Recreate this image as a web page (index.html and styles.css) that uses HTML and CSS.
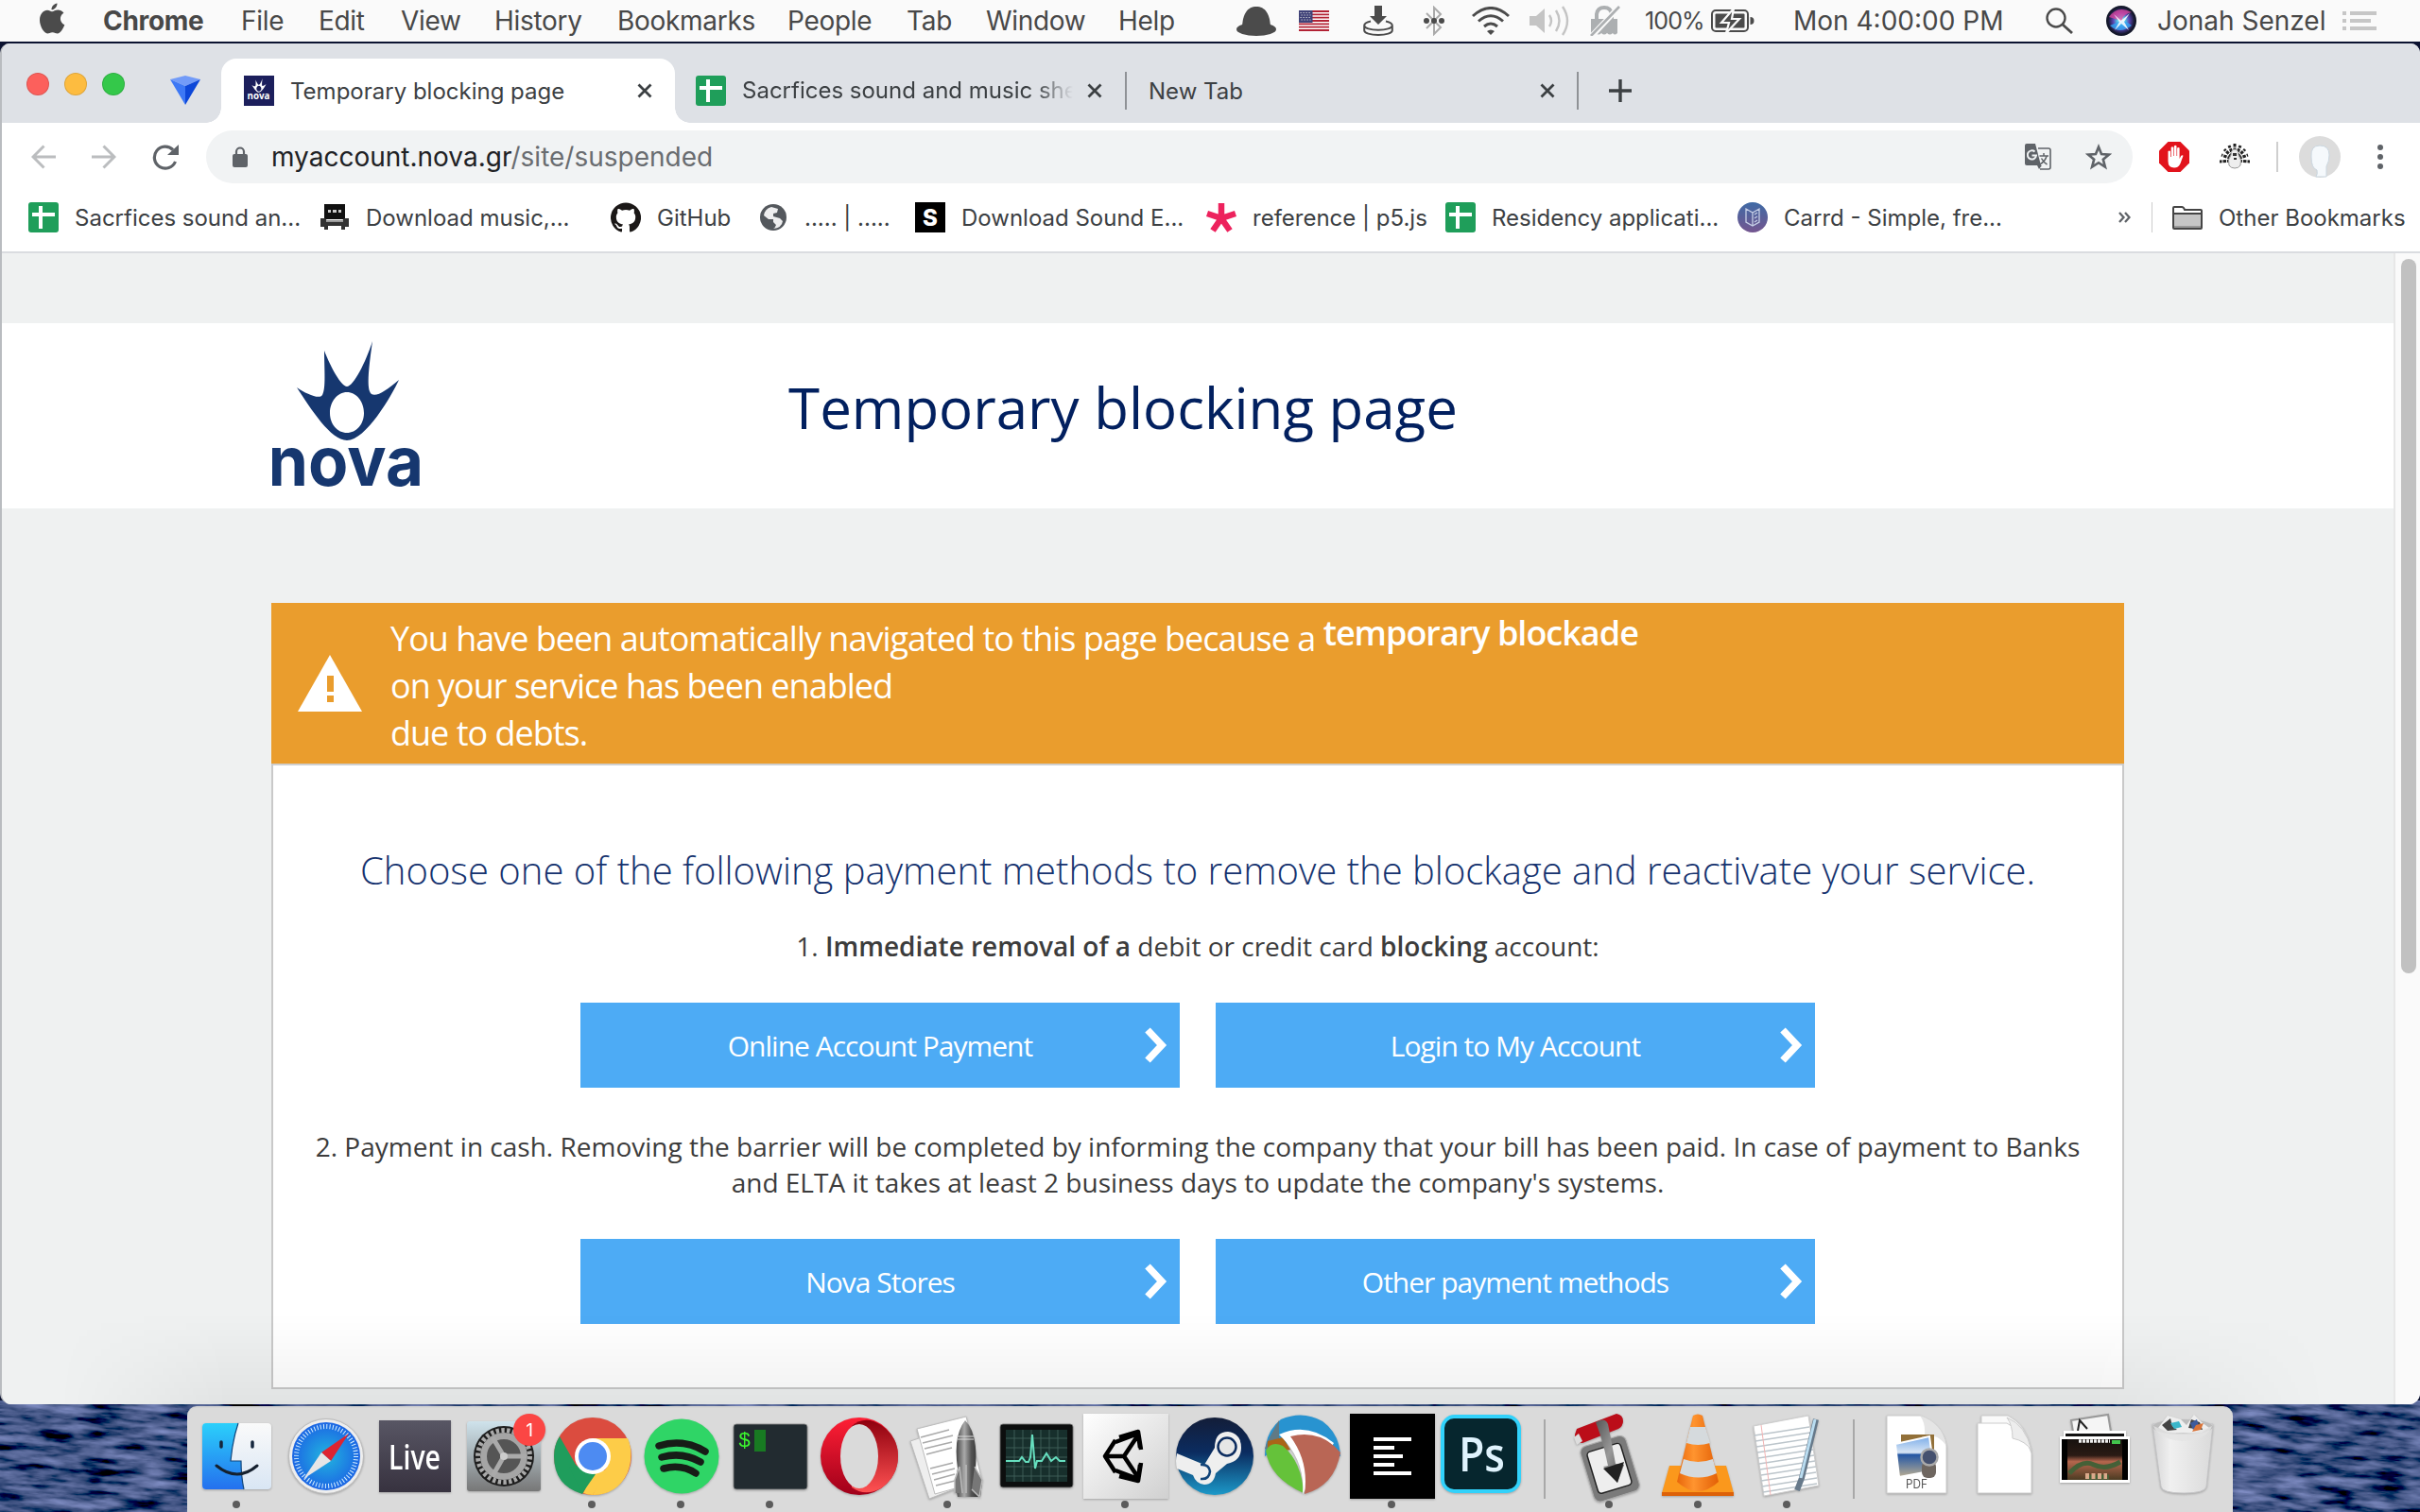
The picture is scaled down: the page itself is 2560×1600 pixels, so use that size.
FILE: index.html
```html
<!DOCTYPE html>
<html lang="en">
<head>
<meta charset="utf-8">
<title>Temporary blocking page</title>
<link rel="stylesheet" href="styles.css">
</head>
<body>
<svg width="0" height="0" class="defs" aria-hidden="true">
  <defs>
    <symbol id="sheets" viewBox="0 0 32 32"><rect width="32" height="32" rx="3" fill="#1f9e5a"/><path d="M11 4h4v24h-4zM4 11h24v4H4z" fill="#fff"/></symbol>
    <symbol id="close" viewBox="0 0 16 16"><path d="M1.500 1.500 14.500 14.500M14.500 1.500 1.500 14.500" stroke="#3c4043" stroke-width="2.800"/></symbol>
    <symbol id="figure" viewBox="0 0 108 106"><path fill-rule="evenodd" d="M0 49C10 56 24 62 27 57C31 50 29 30 29 10C36 28 47 48 53 48C60 48 73 22 80 0C77 22 74 44 77 53C80 62 93 54 108 41C100 58 73 105 53 105C36 105 15 72 0 49ZM53 54C43 54 35 64 35 76C35 88 43 97 53 97C63 97 71 88 71 76C71 64 63 54 53 54Z"/></symbol>
    <symbol id="chev" viewBox="0 0 24 38"><path d="M3 3 18 19 3 35" fill="none" stroke="#fff" stroke-width="7.500"/></symbol>
    <linearGradient id="gFinder" x2="0" y2="1"><stop stop-color="#2bd0fb"/><stop offset="1" stop-color="#2470ee"/></linearGradient>
    <linearGradient id="gFace" x2="0" y2="1"><stop stop-color="#fafafa"/><stop offset="1" stop-color="#d9e6f4"/></linearGradient>
    <radialGradient id="gSafari"><stop stop-color="#21b5df"/><stop offset="1" stop-color="#1c66e4"/></radialGradient>
    <linearGradient id="gLive" x2="0" y2="1"><stop stop-color="#585664"/><stop offset="1" stop-color="#37323f"/></linearGradient>
    <linearGradient id="gPrefs" x2="0" y2="1"><stop stop-color="#cfe3ec"/><stop offset="1" stop-color="#777"/></linearGradient>
    <linearGradient id="gOpera" x2="0" y2="1"><stop stop-color="#ff1f35"/><stop offset="1" stop-color="#a0001a"/></linearGradient>
    <linearGradient id="gOpera2" x2="0" y2="1"><stop stop-color="#8e000e"/><stop offset="1" stop-color="#ff5152"/></linearGradient>
    <linearGradient id="gRocket"><stop stop-color="#333"/><stop offset=".35" stop-color="#aaa"/><stop offset=".6" stop-color="#555"/><stop offset="1" stop-color="#222"/></linearGradient>
    <linearGradient id="gUnity" x2="1" y2="1"><stop stop-color="#fff"/><stop offset="1" stop-color="#d0d0d0"/></linearGradient>
    <linearGradient id="gSteam" x2="0" y2="1"><stop stop-color="#131d38"/><stop offset=".45" stop-color="#0b2c60"/><stop offset="1" stop-color="#1c99c9"/></linearGradient>
    <linearGradient id="gMetal" x2="1" y2="1"><stop stop-color="#555"/><stop offset=".5" stop-color="#999"/><stop offset="1" stop-color="#555"/></linearGradient>
    <linearGradient id="gCone"><stop stop-color="#e8660a"/><stop offset=".4" stop-color="#ff942f"/><stop offset="1" stop-color="#e35f05"/></linearGradient>
    <linearGradient id="gBin"><stop stop-color="#d5d5d6"/><stop offset=".3" stop-color="#f0f0f0"/><stop offset="1" stop-color="#dadada"/></linearGradient>
    <linearGradient id="gSea" x2="0" y2="1"><stop stop-color="#7aabe8"/><stop offset=".4" stop-color="#d8e6f5"/><stop offset=".45" stop-color="#2457a5"/><stop offset="1" stop-color="#b9ad92"/></linearGradient>
    <linearGradient id="gGame" x2="0" y2="1"><stop stop-color="#17120f"/><stop offset=".4" stop-color="#2a1a14"/><stop offset=".55" stop-color="#b5664d"/><stop offset="1" stop-color="#4b3b22"/></linearGradient>
    <radialGradient id="gSiri"><stop stop-color="#fff"/><stop offset=".3" stop-color="#54c8e8"/><stop offset=".6" stop-color="#5b46b4"/><stop offset="1" stop-color="#15182e"/></radialGradient>
    <linearGradient id="gCarrd" x2="0" y2="1"><stop stop-color="#3f6aa5"/><stop offset="1" stop-color="#74568f"/></linearGradient>
  </defs>
</svg>

<svg class="sea" width="2560" height="118" aria-hidden="true">
  <filter id="waves" x="0" y="0" width="100%" height="100%"><feTurbulence type="fractalNoise" baseFrequency=".022 .11" numOctaves="4" seed="8"/><feColorMatrix values=".45 0 0 0 -.17  .5 0 0 0 -.16  .9 0 0 0 -.22  0 0 0 0 1"/></filter>
  <g transform="rotate(4)"><rect y="-200" width="2600" height="420" filter="url(#waves)"/></g>
</svg>

<header class="menubar">
  <nav class="menus">
    <svg class="apple" width="28" height="34" viewBox="0 0 28 34"><path d="M19.500.5C19.700 4 16.500 7.500 13.500 7.300 13.200 4 16.300.9 19.500.5ZM14 9.200c1.600 0 3.500-1.700 6.400-1.700 2 0 4.500 1 6 3.300-5.200 3-4.300 10.300.9 12.500C26 27 23 32.500 19.800 32.500c-2 0-2.800-1.300-5.300-1.300s-3.500 1.300-5.300 1.300C5.500 32.500 1 24.500 1 18.300 1 11.500 5.300 7.800 9 7.800c2.300 0 3.700 1.400 5 1.400Z" fill="#4b4b4b"/></svg>
    <b class="m1">Chrome</b><span class="m2">File</span><span class="m3">Edit</span><span class="m4">View</span><span class="m5">History</span><span class="m6">Bookmarks</span><span class="m7">People</span><span class="m8">Tab</span><span class="m9">Window</span><span>Help</span>
  </nav>
  <div class="status">
    <svg class="s-hat" width="42" height="32" viewBox="0 0 42 32"><ellipse cx="21" cy="25" rx="21" ry="7" fill="#4b4b4b"/><path d="M6 25C6 8 12 1 21 1s15 7 15 24Z" fill="#4b4b4b"/></svg>
    <svg class="s-flag" width="32" height="22" viewBox="0 0 32 22"><path fill="#fff" d="M0 0h32v22H0z"/><path stroke="#b22234" stroke-width="1.800" d="M0 1h32M0 4.300h32M0 7.600h32M0 11h32M0 14.300h32M0 17.600h32M0 21h32"/><path fill="#3f4278" d="M0 0h14.500v13H0z"/><path stroke="#ddd" stroke-width="1.200" stroke-dasharray="1.200 1.800" d="M1.500 2.500h12M2.500 5h10M1.500 7.500h12M2.500 10h10"/></svg>
    <svg class="s-down" width="32" height="32" viewBox="0 0 32 32"><path d="M12 0h8v11h5l-9 9-9-9h5z" fill="#4b4b4b"/><path d="M8 16.500C4 17.300 1.200 19 1.200 21c0 2.700 6.500 4.800 14.800 4.800S30.800 23.700 30.800 21c0-2-2.800-3.700-6.800-4.500M1.200 21v5.300C1.200 29 7.700 31 16 31s14.800-2 14.800-4.700V21" fill="none" stroke="#4b4b4b" stroke-width="2"/></svg>
    <svg class="s-bt" width="22" height="32" viewBox="0 0 22 32"><path d="M3 8l15 15-7 7V2l7 7L3 24" fill="none" stroke="#aaa" stroke-width="2"/><g fill="#4b4b4b"><circle cx="3" cy="16" r="3"/><circle cx="11" cy="16" r="3"/><circle cx="19" cy="16" r="3"/></g></svg>
    <svg class="s-wifi" width="40" height="30" viewBox="0 0 40 30"><g fill="none" stroke="#4b4b4b" stroke-width="3"><path d="M1 10Q20-7 39 10"/><path d="M7 15.500Q20 4 33 15.500"/><path d="M13 21q7-6 14 0"/></g><path d="M16 26q4-3 8 0l-4 4z" fill="#4b4b4b"/></svg>
    <svg class="s-vol" width="42" height="32" viewBox="0 0 42 32"><path d="M0 11h7l9-8v26l-9-8H0z" fill="#c4c4c4"/><path d="M21 10q4 6 0 12M28 5q7 11 0 22M35 1q10 15 0 30" fill="none" stroke="#c4c4c4" stroke-width="2.400"/></svg>
    <svg class="s-lock" width="32" height="32" viewBox="0 0 32 32"><path d="M7 14V9Q8 2 15 2q7 0 8 7v5" fill="none" stroke="#acafb1" stroke-width="4"/><path d="M1 14h28v15q-3 3-5 0-3 3-6 0-3 3-6 0-3 3-6 0-3 3-5 0z" fill="#acafb1"/><path d="M1 33 31 1" stroke="#fafafa" stroke-width="6"/><path d="M1 32 31 1" stroke="#acafb1" stroke-width="2.600"/></svg>
    <span class="pct">100%</span>
    <svg class="s-batt" width="46" height="24" viewBox="0 0 46 24"><rect x="1" y="1" width="38" height="22" rx="4" fill="none" stroke="#4b4b4b" stroke-width="2"/><rect x="4.500" y="4.500" width="31" height="15" rx="1" fill="#4b4b4b"/><path d="M41.500 8q4 0 4 4t-4 4z" fill="#4b4b4b"/><path d="M24-1 11 14h8l-3 11 14-15h-8z" fill="#4b4b4b" stroke="#fafafa" stroke-width="2.200"/></svg>
    <span class="clock">Mon 4:00:00 PM</span>
    <svg class="s-find" width="30" height="28" viewBox="0 0 30 28"><circle cx="11" cy="11" r="9.500" fill="none" stroke="#4b4b4b" stroke-width="2.400"/><path d="m18 18 10 9" stroke="#4b4b4b" stroke-width="2.800"/></svg>
    <svg class="s-siri" width="32" height="32" viewBox="0 0 32 32"><circle cx="16" cy="16" r="16" fill="#14182b"/><circle cx="16" cy="16" r="14" fill="url(#gSiri)"/><path d="M3 12q9-13 24-5-8 1-11 9Z" fill="#e0459e" opacity=".75"/><path d="M4 21q10 10 23 0-6-5-11-5Z" fill="#33a8f5" opacity=".8"/><path d="m8 9 8 7 9-8-6 9 5 9-8-7-7 7 5-9z" fill="#fff" opacity=".85"/></svg>
    <span class="user">Jonah Senzel</span>
    <svg width="36" height="20" viewBox="0 0 36 20"><path d="M0 2h4M8 2h28M0 10h4M8 10h22M0 18h4M8 18h28" stroke="#c6c6c6" stroke-width="4"/></svg>
  </div>
</header>

<div class="window">
  <div class="tabstrip">
    <div class="lights"><i class="red"></i><i class="yellow"></i><i class="green"></i></div>
    <svg class="gem" width="32" height="32" viewBox="0 0 32 32"><path d="M0 4 16 0l16 4-16 7z" fill="#729bf8"/><path d="m0 4 16 7v20z" fill="#3d78f5"/><path d="M32 4 16 11v20z" fill="#0d47d8"/></svg>
    <div class="tab active">
      <svg width="32" height="32" viewBox="0 0 32 32"><path fill="#1c1f5c" d="M0 0h32v32H0z"/><use href="#figure" x="8" y="3" width="16" height="15" fill="#fff"/><text x="3.500" y="25" font-family="Open Sans" font-weight="700" font-size="11" textLength="24" lengthAdjust="spacingAndGlyphs" fill="#fff">nova</text></svg>
      <span class="label t1">Temporary blocking page</span>
      <svg width="16" height="16"><use href="#close"/></svg>
    </div>
    <div class="tab second">
      <svg width="32" height="32"><use href="#sheets"/></svg>
      <span class="label faded t2">Sacrfices sound and music sheet</span>
      <svg width="16" height="16"><use href="#close"/></svg>
    </div>
    <div class="tab third">
      <span class="label t3">New Tab</span>
      <svg width="16" height="16"><use href="#close"/></svg>
    </div>
    <svg class="plus" width="24" height="24" viewBox="0 0 24 24"><path d="M12 0v24M0 12h24" stroke="#3c4043" stroke-width="3.400"/></svg>
  </div>

  <div class="toolbar">
    <svg class="back" width="26" height="26" viewBox="0 0 26 26"><path d="M26 13H2M13.500 1.500 2 13l11.500 11.500" fill="none" stroke="#bbbdbf" stroke-width="3"/></svg>
    <svg class="fwd" width="26" height="26" viewBox="0 0 26 26"><path d="M0 13h24M12.500 1.500 24 13 12.500 24.500" fill="none" stroke="#bbbdbf" stroke-width="3"/></svg>
    <svg class="reload" width="28" height="27" viewBox="0 0 28 27"><path d="M24.500 18A11.500 11.500 0 1 1 22 5.500" fill="none" stroke="#5f6368" stroke-width="3.200"/><path d="M28 0v11H16z" fill="#5f6368"/></svg>
    <div class="omnibox">
      <svg width="16" height="22" viewBox="0 0 16 22"><rect y="8" width="16" height="14" rx="2" fill="#5f6368"/><path d="M4 9V5.500a4 4 0 0 1 8 0V9" fill="none" stroke="#5f6368" stroke-width="2.200"/></svg>
      <span class="url">myaccount.nova.gr<em>/site/suspended</em></span>
      <svg class="translate" width="28" height="28" viewBox="0 0 28 28"><path d="M14 5h11q2 0 2 2v18q0 2-2 2H16" fill="none" stroke="#5f6368" stroke-width="1.600"/><path d="M2 0h9l6 23H2q-2 0-2-2V2Q0 0 2 0Z" fill="#5f6368"/><path d="m13 23 5 0-3 4z" fill="#5f6368"/><path d="M10.500 8.500A4.600 4.600 0 1 0 12 12.500H7.500" fill="none" stroke="#f1f3f4" stroke-width="2"/><path d="M15.500 13H25M20 10v3M23 13q-1 5-7 9M17.500 15.500q2 4 6 6.500" fill="none" stroke="#5f6368" stroke-width="1.500"/></svg>
      <svg width="28" height="28" viewBox="0 0 28 28"><path d="m14 3.500 3 7.500 8 .6-6.200 5.100 2.100 7.900L14 20.200l-6.900 4.400 2.100-7.900L3 11.600l8-.6z" fill="none" stroke="#5f6368" stroke-width="2.600"/></svg>
    </div>
    <svg class="abp" width="32" height="32" viewBox="0 0 32 32"><path d="M9.500 0h13L32 9.500v13L22.500 32h-13L0 22.500v-13z" fill="#e2131c"/><path d="M9.500 10q1.500-1.200 2.500 0v6h.7V6q1.300-1.300 2.600 0v9h.6V4.500q1.300-1.300 2.600 0V15h.6V6.500q1.300-1.200 2.500 0V18l1.500-3q1.500-1.500 2.400-.2L22.500 23q-2 4.500-6.500 4.500-6.500 0-6.500-7z" fill="#fff"/></svg>
    <svg class="peacock" width="32" height="28" viewBox="0 0 32 28"><g stroke="#222" stroke-width="3" stroke-dasharray="3.500 1"><path d="M16 18 0 19M16 17 2 12M16 17 5 6M16 17 10 2M16 17V0M16 17 22 2M16 17 27 6M16 17l14-5M16 18l16 1"/></g><path d="M16 6q4 0 4 6 4 5 2 11-2 3-6 3t-6-3q-2-6 2-11 0-6 4-6Z" fill="#eee" stroke="#999"/><path d="M14 10h4v3h-4zM15 15h3v2h-3z" fill="#333"/></svg>
    <i class="tsep"></i>
    <svg class="avatar" width="44" height="44" viewBox="0 0 44 44"><circle cx="22" cy="22" r="22" fill="#dcdcdc"/><path d="M13 22q-1-12 9-12t10 10q0 7-3 12v11H18q2-3 1-7-6-2-6-14Z" fill="#f5f9fc" stroke="#c9d5de" stroke-width="1"/></svg>
    <svg width="6" height="28" viewBox="0 0 6 28"><g fill="#5f6368"><circle cx="3" cy="4" r="3"/><circle cx="3" cy="14" r="3"/><circle cx="3" cy="24" r="3"/></g></svg>
  </div>

  <div class="bookmarks">
    <div class="bm"><svg width="32" height="32"><use href="#sheets"/></svg><span class="b1">Sacrfices sound an...</span></div>
    <div class="bm"><svg width="32" height="32" viewBox="0 0 32 32"><path d="M5 2h22v16H5z" fill="#111"/><path d="M9 8h3v3H9zM14 8h4v3h-4zM20 8h3v3h-3z" fill="#ccc"/><path d="M1 17h5l3 4h14l3-4h5v9h-4v3h-4v-4H9v4H5v-3H1z" fill="#333"/><path d="M7 19h18v2H7z" fill="#999"/></svg><span class="b2">Download music,...</span></div>
    <div class="bm"><svg width="32" height="32" viewBox="0 0 16 16"><path d="M8 .2a8 8 0 0 0-2.530 15.590c.4.070.55-.17.550-.38v-1.490c-2.230.48-2.700-.95-2.700-.95-.36-.92-.89-1.170-.89-1.170-.73-.5.050-.49.050-.49.810.06 1.230.83 1.230.83.720 1.230 1.880.87 2.340.67.070-.52.280-.88.510-1.080-1.780-.2-3.640-.89-3.640-3.950 0-.88.310-1.590.82-2.150-.08-.2-.36-1.020.08-2.120 0 0 .67-.22 2.200.82a7.600 7.600 0 0 1 4 0c1.530-1.040 2.200-.82 2.200-.82.440 1.100.160 1.920.08 2.120.510.560.82 1.270.82 2.150 0 3.070-1.870 3.750-3.650 3.950.290.250.54.730.54 1.480v2.200c0 .210.150.460.550.38A8 8 0 0 0 8 .2Z" fill="#1b1817"/></svg><span class="b3">GitHub</span></div>
    <div class="bm"><svg width="32" height="32" viewBox="0 0 32 32"><circle cx="16" cy="16" r="14" fill="#54585d"/><path d="M14 5q-7 2-8 9l5 4 5 0 0 3 3 3q-1 3-3 4 9-1 10-8l-3-3-7-2 0-3 4-1 1-4z" fill="#fff" opacity=".9"/></svg><span class="b4">..... | .....</span></div>
    <div class="bm"><svg width="32" height="32" viewBox="0 0 32 32"><path d="M0 0h32v32H0z"/><text x="16" y="25" text-anchor="middle" font-family="Inter" font-weight="800" font-size="24" fill="#fff">S</text></svg><span class="b5">Download Sound E...</span></div>
    <div class="bm"><svg width="32" height="32" viewBox="0 0 32 32"><path d="M16 17V1M16 17 1 12M16 17l15-5M16 17 7 30M16 17l9 13" stroke="#ed225d" stroke-width="6.500"/></svg><span class="b6">reference | p5.js</span></div>
    <div class="bm"><svg width="32" height="32"><use href="#sheets"/></svg><span class="b7">Residency applicati...</span></div>
    <div class="bm"><svg width="32" height="32" viewBox="0 0 32 32"><circle cx="16" cy="16" r="16" fill="url(#gCarrd)"/><path d="m9 7 7 4 7-4v14l-7 4-7-4zM16 11v14M18 13l3-2M18 17l3-2M18 21l3-2" fill="none" stroke="#c6cfe6" stroke-width="1.300"/></svg><span class="b8">Carrd - Simple, fre...</span></div>
    <svg class="more" width="13" height="12" viewBox="0 0 13 12"><path d="m1 1 4.500 5L1 11M7 1l4.500 5L7 11" fill="none" stroke="#5f6368" stroke-width="2.300"/></svg>
    <div class="bm other"><svg width="32" height="32" viewBox="0 0 32 32"><path d="M1 8V6q0-1 1-1h8q2 0 3 3h17q1 0 1 1v19H1z" fill="#fff"/><path d="M1 12h30v16H1z" fill="#c6c6c6"/><path d="M1 25h30v3H1z" fill="#999"/><path d="M1 12V6q0-1 1-1h8q2 0 3 3h17q1 0 1 1v18q0 1-1 1H2q-1 0-1-1V12h30" fill="none" stroke="#454545" stroke-width="2"/></svg><span class="b9">Other Bookmarks</span></div>
  </div>

  <div class="viewport">
    <div class="page">
      <div class="masthead">
        <svg class="logo" width="158" height="156" viewBox="0 0 158 156"><use href="#figure" x="26" y="0" width="108" height="106" fill="#16376f"/><text x="-5" y="152.500" font-family="Inter" font-weight="700" font-size="73" textLength="165" lengthAdjust="spacingAndGlyphs" fill="#16376f">nova</text></svg>
        <h1><span>Temporary blocking page</span></h1>
      </div>
      <div class="card">
        <div class="alert">
          <svg width="68" height="60" viewBox="0 0 68 60"><path d="M34 0 68 60H0z" fill="#fff"/><path d="M31 22h7v17h-7zM31 43h7v7h-7z" fill="#ea9d2d"/></svg>
          <p><span class="a1">You have been automatically navigated to this page because a</span> <strong>temporary blockade</strong> <span class="a2">on your service has been enabled</span><br><span class="a3">due to debts.</span></p>
        </div>
        <div class="body">
          <h2><span>Choose one of the following payment methods to remove the blockage and reactivate your service.</span></h2>
          <p class="step one"><span>1. <b>Immediate removal of a</b> debit or credit card <b>blocking</b> account:</span></p>
          <div class="buttons">
            <a><span>Online Account Payment</span><svg width="24" height="38"><use href="#chev"/></svg></a>
            <a><span>Login to My Account</span><svg width="24" height="38"><use href="#chev"/></svg></a>
          </div>
          <p class="step two"><span>2. Payment in cash. Removing the barrier will be completed by informing the company that your bill has been paid. In case of payment to Banks<br>and ELTA it takes at least 2 business days to update the company's systems.</span></p>
          <div class="buttons">
            <a><span>Nova Stores</span><svg width="24" height="38"><use href="#chev"/></svg></a>
            <a><span>Other payment methods</span><svg width="24" height="38"><use href="#chev"/></svg></a>
          </div>
        </div>
      </div>
    </div>
    <div class="scrollbar"><i></i></div>
  </div>
</div>

<div class="dock">
  <div class="app run"><svg viewBox="0 0 94 112"><rect x="11" y="18" width="73" height="70" rx="4" fill="url(#gFace)"/><path d="M15 18h34q-6 18-8 40h11q0 16 3 30H15q-4 0-4-4V22q0-4 4-4Z" fill="url(#gFinder)"/><path d="M49 18q-6 18-8 40h11q0 16 3 30" fill="none" stroke="#12477c" stroke-width="1.200"/><path d="M31 38v5M64 38v5" stroke="#15263d" stroke-width="3.500" stroke-linecap="round"/><path d="M26 63q22 18 43 0" fill="none" stroke="#15202e" stroke-width="3" stroke-linecap="round"/></svg></div>
  <div class="app"><svg viewBox="0 0 94 112"><circle cx="48" cy="53" r="39.500" fill="#eee" stroke="#bbb"/><circle cx="48" cy="53" r="36" fill="url(#gSafari)"/><circle cx="48" cy="53" r="31.500" fill="none" stroke="#d7efff" stroke-width="5" stroke-dasharray="1 2.300"/><path d="M72 29 53 58 43 49z" fill="#dd2431"/><path d="M24 77 43 49l10 9z" fill="#e6e6e6"/></svg></div>
  <div class="app"><svg viewBox="0 0 94 112"><path d="M10 15h76v76H10z" fill="url(#gLive)"/><text x="20" y="67" font-family="Open Sans" font-size="36" font-weight="600" textLength="55" lengthAdjust="spacingAndGlyphs" fill="#fff">Live</text></svg></div>
  <div class="app"><svg viewBox="0 0 94 112"><rect x="9" y="16" width="78" height="74" rx="3" fill="url(#gPrefs)"/><circle cx="48" cy="53" r="32" fill="#1e1e1e"/><circle cx="48" cy="53" r="27.500" fill="none" stroke="#aaa" stroke-width="5" stroke-dasharray="3.400 2.360"/><circle cx="48" cy="53" r="21.500" fill="#555" stroke="#a5a5a5" stroke-width="7"/><path d="M48 53h24M48 53 36 33M48 53 36 74" stroke="#aaa" stroke-width="5"/><circle cx="48" cy="53" r="4" fill="#ccc"/><circle cx="58" cy="25" r="17" transform="translate(17 0)" fill="#fb4644"/><text x="75" y="32" text-anchor="middle" font-family="Inter" font-size="19" fill="#fff">1</text></svg></div>
  <div class="app run"><svg viewBox="0 0 94 112"><circle cx="48" cy="53" r="41" fill="#db4c3f"/><path d="M13 32 30 62 48 75 37 93Q7 84 7 53q0-12 6-21Z" fill="#1f9d5c"/><path d="M48 34h37q7 17 0 36-11 24-37 24L63 64z" fill="#fdcc48"/><path d="m48 94 17-28-17 6-10 20q5 2 10 2Z" fill="#fdcc48"/><path d="m37 92 14-20-8-3-20-5Z" fill="#1f9d5c"/><circle cx="48" cy="53" r="19" fill="#fff"/><circle cx="48" cy="53" r="15" fill="#4d8bf2"/></svg></div>
  <div class="app run"><svg viewBox="0 0 94 112"><circle cx="48" cy="53" r="39.500" fill="#2fd566"/><path d="M24 42q26-8 49 6M27 54q22-6 41 5M29 66q19-5 34 5" fill="none" stroke="#171c17" stroke-linecap="round" stroke-width="7.500"/></svg></div>
  <div class="app run"><svg viewBox="0 0 94 112"><rect x="9" y="19" width="78" height="69" rx="3" fill="#222b30" stroke="#888" stroke-width=".8"/><text x="14" y="43" font-family="Liberation Mono" font-size="22" fill="#3bf52e">$</text><path d="M31 25h12v23H31z" fill="#187a22"/></svg></div>
  <div class="app"><svg viewBox="0 0 94 112"><circle cx="48" cy="53" r="41" fill="url(#gOpera)"/><path d="M40 21q14-12 31-1 18 12 18 33 0 21-18 34-17 9-31-1z" fill="url(#gOpera2)"/><ellipse cx="48" cy="53" rx="20" ry="34" fill="#dadada"/></svg></div>
  <div class="app run"><svg viewBox="0 0 94 112"><path d="m8 37 45-15 22 58-47 18z" fill="#eee" stroke="#bbb"/><path d="m15 24 52-13 17 68-50 14z" fill="#fff" stroke="#bbb"/><path d="m19 33 30-8M21 39l32-8M23 45l29-7M25 51l27-7M29 66l24-6M31 72l24-6M33 78l22-6M35 84l20-5" stroke="#aaa" stroke-width="1.500"/><path d="M66 15q14 14 11 53l7 12-2 16H58l-3-16 3-14q-5-35 8-51Z" fill="url(#gRocket)"/><path d="M57 32h18M58 35h17" stroke="#ddd"/><path d="M55 92V78l5-14 3 28M76 64l8 14-3 18-8-8M67 62v30" fill="#777" stroke="#bbb" stroke-width="1.500"/></svg></div>
  <div class="app"><svg viewBox="0 0 94 112"><rect x="9" y="19" width="77" height="67" rx="3" fill="#0c0e0e" stroke="#777" stroke-width=".8"/><path d="M15 25h65v55H15z" fill="#172f2c"/><path d="M15 34h65M15 44h65M15 54h65M15 64h65M15 74h65M24 25v55M33 25v55M42 25v55M52 25v55M61 25v55M70 25v55" stroke="#426159" stroke-width=".9"/><path d="M15 58h14l3-4 4 5h3l2-5 2-24 3 36 2-8h5l5-8 5 8 5-4 4 4h6" fill="none" stroke="#66dfbf" stroke-width="2"/></svg></div>
  <div class="app run"><svg viewBox="0 0 94 112"><path d="M3 8h90v90H3z" fill="url(#gUnity)"/><g transform="translate(1 0)" fill="none" stroke="#000" stroke-width="4.500" stroke-linejoin="round"><path d="M36 36 25 53l11 17M40 33l20-6 3 19M40 74l20 5 3-19M39 53h-12M45 53l16-24M45 53l16 24M35 53h12M36 38l24-9 2 15M36 68l24 9 2-15"/></g></svg></div>
  <div class="app"><svg viewBox="0 0 94 112"><circle cx="48" cy="53" r="41" fill="url(#gSteam)"/><path d="M8 50 37 62 48 44q0-17 14-17 14 2 14 17 0 14-15 17L49 71q-2 12-12 12-9-1-12-10L8 66Q6 58 8 50Z" fill="#efefef"/><circle cx="61" cy="43" r="9.500" fill="#e6e6e6" stroke="#0c2c5f" stroke-width="2.500"/><path d="M33 62q9-1 10 7-1 9-10 8" fill="none" stroke="#114378" stroke-width="2.500"/></svg></div>
  <div class="app"><svg viewBox="0 0 94 112"><path d="M7 53Q7 27 24 14q23-10 44 2 18 13 19 37l-18 3-40-17z" fill="#2893d0"/><path d="M10 37 22 15v23l10 14-25-7z" fill="#607a85"/><path d="m10 37 16-4 8 13-24 5z" fill="#aa6518"/><path d="M8 47q6-11 18-5 20 17 22 50-36-16-40-45Z" fill="#65c23a"/><path d="M22 30Q52 16 80 39L47 93Q50 57 22 30Z" fill="#fff"/><path d="M34 32q32-8 53 17-6 35-38 44 5-34-15-61Z" fill="#b96655"/></svg></div>
  <div class="app run"><svg viewBox="0 0 94 112"><path d="M3 8h90v90H3z"/><path d="M28 35h40M28 44h22M28 53h31M28 62h22M28 71h40" stroke="#fff" stroke-width="4"/></svg></div>
  <div class="app"><svg viewBox="0 0 94 112"><rect x="5" y="9" width="85" height="83" rx="15" fill="#31d2fb"/><rect x="9" y="13" width="77" height="75" rx="10" fill="#06262e"/><text x="24" y="69" font-family="Open Sans" font-weight="600" font-size="51" textLength="49" lengthAdjust="spacingAndGlyphs" fill="#dff3fd">Ps</text></svg></div>
  <i class="sep s1"></i>
  <div class="app run"><svg viewBox="0 0 94 112"><rect x="23" y="36" width="50" height="61" rx="7" transform="rotate(-17 47 66)" fill="#7a7a7a" stroke="#aaa"/><rect x="29" y="43" width="37" height="46" rx="4" transform="rotate(-17 47 66)" fill="#eee" stroke="#222" stroke-width="1.500"/><path d="m13 24 42-16q7 1 7 8 0 5-5 8L19 39q-9 0-8-9Z" fill="#bb0d19"/><path d="m10 33 5-4 4 8-6 4z" fill="#ddd"/><path d="M33 17q10-6 13 2 4 20 8 42l9 1-7 19-15-17 5-1Q41 37 33 17Z" fill="url(#gMetal)"/><path d="m41 66 22-7-7 22z" fill="#222"/></svg></div>
  <div class="app run"><svg viewBox="0 0 94 112"><path d="M17 63h60l8 29q0 3-3 3H12q-3 0-3-3z" fill="#fb981c"/><path d="M9 91h76v4H9z" fill="#dd6108"/><path d="M42 10q5-3 10 0l17 70q-22 20-44 0z" fill="url(#gCone)"/><path d="M39 22h16l5 17q-13 4-25 0zM32 56q15 6 31 0l4 15q-19 9-39 0z" fill="#d5dadd"/></svg></div>
  <div class="app run"><svg viewBox="0 0 94 112"><path d="m12 21 58-11 11 74-58 11z" fill="#fff" stroke="#ccc"/><path d="m13 31 58-9M14 37l58-9M15 43l58-9M16 49l58-9M17 55l58-9M18 61l58-9M19 67l58-9M20 73l58-9M20 79l58-9M21 85l58-9M22 91l57-9" stroke="#bcc5cb" stroke-width="1.300"/><path d="m20 20 10 74" stroke="#f2b4b4"/><path d="M78 14 63 76l-5 13" fill="none" stroke="#66798a" stroke-width="6"/><path d="M77 14 62 76" stroke="#b9dcf0" stroke-width="3"/></svg></div>
  <i class="sep s2"></i>
  <div class="app"><svg viewBox="0 0 94 112"><path d="M15 10h35q24 10 28 32v50H15z" fill="#fff" stroke="#ccc"/><path d="M50 10q6 8 5 20 15 0 23 12Q74 18 50 10Z" fill="#e5e5e5"/><path d="M30 30h35v24H30z" fill="#927039"/><path d="m24 40 36-8 5 36-37 7z" fill="url(#gSea)" stroke="#fff" stroke-width="2"/><rect x="52" y="58" width="15" height="18" rx="6" fill="#6e6660"/><circle cx="60" cy="54" r="8.500" fill="#45516f" stroke="#aaa" stroke-width="2.500"/><text x="35" y="87" font-family="Inter" font-size="13" textLength="23" lengthAdjust="spacingAndGlyphs" fill="#555">PDF</text></svg></div>
  <div class="app"><svg viewBox="0 0 94 112"><path d="M21 10h28q20 10 24 35v45H21z" fill="#fafafa" stroke="#ccc"/><path d="M17 18h31q20 10 26 32v42H17z" fill="#fff" stroke="#ccc"/><path d="M48 12q6 8 6 22 14 3 20 13Q68 20 48 12Z" fill="#ededed" stroke="#ccc"/></svg></div>
  <div class="app"><svg viewBox="0 0 94 112"><path d="m22 15 39-6 3 18-39 6z" fill="#f5f5f5" stroke="#999" stroke-width="2"/><path d="m29 26 2-11 8 9" fill="none" stroke="#222" stroke-width="2"/><path d="M14 26h66v20H14z" fill="#fff"/><path d="M16 29h62v6H16z" fill="#111"/><path d="M10 32h74v49H10z" fill="#fff"/><path d="M12 35h70v43H12z" fill="#000"/><path d="M18 35h58v43H18z" fill="url(#gGame)"/><path d="M30 37h33" stroke="#eee" stroke-width="3.500" stroke-dasharray="3 1"/><path d="M20 71q14-15 26-9t28-3M38 75h24" fill="none" stroke="#456037" stroke-width="5"/><path d="M37 74h23" stroke="#dba98b" stroke-width="6" stroke-dasharray="4 2.500"/><path d="M65 38h9" stroke="#42c44d" stroke-width="4"/></svg></div>
  <div class="app"><svg viewBox="0 0 94 112"><path d="M14 19h64l-7 66q-1 7-24 7t-24-7z" fill="url(#gBin)" stroke="#c4c4c6"/><ellipse cx="46" cy="22" rx="32" ry="8" fill="#bcbcbc"/><path d="m20 23 10-13 14 4 6 6 8-11 8 8 8 6-8 5H30z" fill="#eee"/><path d="m24 20 9-7 2 8 5 4-10 1zM52 23l3-9 9 3 3 8z" fill="#444"/><path d="m33 18 9-2 3 6-8 2z" fill="#3bb6c9"/><path d="m54 18 7-4 2 7-6 4z" fill="#3c5b9d"/><path d="m60 20 8-2-3 7-9 2z" fill="#d97439"/><path d="M15 21q32 15 62 0-4 14-31 16-26-2-31-16Z" fill="#e4e4e4" opacity=".8"/></svg></div>
</div>
</body>
</html>
```
FILE: styles.css
```css
* { box-sizing: border-box; }
body { margin: 0; width: 2560px; height: 1600px; overflow: hidden; position: relative; background: #0b1230; font-family: Inter, "Liberation Sans", sans-serif; color: #3c4043; display: flex; flex-direction: column; }
svg { display: block; flex: none; }
span, b, strong, em { white-space: nowrap; }
.defs { position: absolute; }
.sea { position: absolute; left: 0; bottom: 0; }

.menubar { height: 44px; flex: none; background: #fafafa; display: flex; align-items: center; font-size: 28px; line-height: 44px; color: #484848; position: relative; }
.menus { display: flex; align-items: center; width: 1308px; padding-left: 41px; letter-spacing: -.3px; }
.menus span, .menus b { flex: none; }
.apple { margin-right: 40px; margin-top: -4px; }
.m1 { width: 146px; font-weight: 700; }
.m2 { width: 82px; } .m3 { width: 87px; } .m4 { width: 99px; } .m5 { width: 130px; }
.m6 { width: 180px; } .m7 { width: 126px; } .m8 { width: 84px; } .m9 { width: 140px; }
.status { display: flex; align-items: center; }
.s-hat { margin-right: 24px; } .s-flag { margin-right: 36px; } .s-down { margin-right: 32px; }
.s-bt { margin-right: 29px; } .s-wifi { margin-right: 21px; } .s-vol { margin-right: 22px; } .s-lock { margin-right: 26px; }
.pct { width: 70px; font-size: 25px; letter-spacing: -.9px; }
.s-batt { margin-right: 41px; }
.clock { width: 267px; }
.s-find { margin-right: 34px; } .s-siri { margin-right: 22px; }
.user { width: 196px; }

.window { position: relative; margin: 2px 0 0; width: 2560px; height: 1440px; flex: none; border-left: 2px solid #b9bcc0; border-radius: 10px 10px 12px 12px; overflow: hidden; background: #fff; }
.window::after { content: ""; position: absolute; z-index: 2; left: 60px; right: 60px; bottom: 0; height: 96px; background: linear-gradient(transparent, rgba(0,0,0,.055)); -webkit-mask-image: linear-gradient(90deg, transparent, #000 180px, #000 2150px, transparent 2400px); mask-image: linear-gradient(90deg, transparent, #000 180px, #000 2150px, transparent 2400px); }

.tabstrip { height: 84px; background: #dee1e6; display: flex; align-items: center; padding: 16px 0 0 26px; }
.lights { display: flex; gap: 16px; margin-top: -14px; }
.lights i { width: 24px; height: 24px; border-radius: 50%; border: 1px solid rgba(0,0,0,.12); }
.red { background: #fc605c; } .yellow { background: #fdbc40; } .green { background: #34c84a; }
.gem { margin: 0 22px 0 48px; }
.tab { height: 68px; display: flex; align-items: center; font-size: 24px; flex: none; }
.tab svg:last-child { margin-left: auto; }
.active { width: 480px; background: #fff; border-radius: 16px 16px 0 0; padding: 0 24px 0 24px; position: relative; }
.active::before, .active::after { content: ""; position: absolute; bottom: 0; width: 16px; height: 16px; }
.active::before { left: -16px; background: radial-gradient(circle at 0 0, transparent 15.500px, #fff 16px); }
.active::after { right: -16px; background: radial-gradient(circle at 100% 0, transparent 15.500px, #fff 16px); }
.label { margin-left: 17px; }
.second { width: 478px; height: 40px; padding: 0 24px 0 22px; border-right: 2px solid #8f9296; }
.third { width: 478px; height: 40px; padding: 0 23px 0 6px; border-right: 2px solid #8f9296; }
.faded { width: 350px; overflow: hidden; line-height: 40px; -webkit-mask-image: linear-gradient(90deg, #000 310px, transparent 350px); mask-image: linear-gradient(90deg, #000 310px, transparent 350px); }
.plus { margin-left: 32px; }

.toolbar { height: 72px; display: flex; align-items: center; padding-left: 31px; }
.fwd { margin-left: 38px; } .reload { margin: 0 29px 0 38px; }
.omnibox { width: 2038px; height: 56px; border-radius: 28px; background: #f1f3f4; display: flex; align-items: center; padding: 0 22px 0 28px; }
.url { font-size: 28px; margin-left: 25px; color: #202124; }
.url em { font-style: normal; color: #696c70; }
.translate { margin: 0 36px 0 auto; }
.abp { margin-left: 28px; } .peacock { margin: 0 28px 0 32px; }
.tsep { width: 2px; height: 32px; background: #cfcfcf; }
.avatar { margin: 0 39px 0 22px; }

.bookmarks { height: 66px; border-bottom: 2px solid #dadce0; display: grid; grid-template-columns: 308px 308px 156px 166px 308px 253px 309px 403px 35px 1fr; align-items: start; padding: 12px 0 0 28px; font-size: 24px; }
.bm { display: flex; gap: 17px; align-items: center; height: 32px; }
.more { margin-top: 10px; }
.other { border-left: 1px solid #ccc; padding-left: 21px; }

.viewport { height: 1218px; display: flex; }
.page { width: 2530px; background: #eff1f1; padding-top: 74px; font-family: "Open Sans", "Liberation Sans", sans-serif; }
.scrollbar { flex: 1; background: #fafafa; border-left: 2px solid #e7e7e7; padding: 6px 0 0 6px; }
.scrollbar i { display: block; width: 16px; height: 756px; border-radius: 8px; background: #c1c1c1; }
.masthead { height: 196px; background: #fff; display: grid; grid-template-columns: 286px 158px 1642px; padding-top: 19px; }
.logo { grid-column: 2; }
h1 { margin: 0 0 0 -158px; font-size: 60px; font-weight: 400; line-height: 140px; text-align: center; color: #02205f; position: relative; }
.masthead h1 { grid-column: 3; }
.card { margin: 100px auto 0; width: 1960px; height: 832px; background: #fff; border: 2px solid #c9c9c9; border-top: 0; position: relative; }
.alert { height: 170px; margin: 0 -2px; background: #ea9d2d; display: flex; align-items: center; padding-left: 28px; color: #fff; }
.alert p { margin: 5px 0 0 30px; font-size: 36px; line-height: 50px; letter-spacing: -1px; }
.alert strong { font-weight: 600; position: relative; top: -6px; }
.body { border-top: 2px solid #cfcfcf; }
h2 { margin: 0; padding-top: 84px; text-align: center; font-size: 40px; line-height: 54px; font-weight: 300; color: #16336f; }
.step { margin: 0; text-align: center; font-size: 28px; line-height: 38px; color: #3c3c3c; }
.step b { font-weight: 600; }
.one { padding-top: 34px; }
.buttons { display: flex; gap: 38px; justify-content: center; }
.buttons a { width: 634px; height: 90px; background: #4dabf5; color: #fff; font-size: 30px; letter-spacing: -1px; display: flex; align-items: center; }
.buttons a span { flex: 1; text-align: center; margin-left: 37px; }
.buttons svg { margin-right: 13px; }
.one + .buttons { margin-top: 41px; }
.two { padding-top: 43px; }
.two + .buttons { margin-top: 41px; }

.dock { position: absolute; z-index: 3; left: 198px; top: 1488px; width: 2164px; height: 112px; padding-left: 5px; border-radius: 10px 10px 0 0; background: #dadada; border-top: 2px solid #d5d5d5; display: flex; }
.app { width: 94px; height: 112px; position: relative; flex: none; margin-top: -2px; }
.app svg { width: 94px; height: 112px; overflow: visible; filter: drop-shadow(0 1px 1px rgba(0,0,0,.25)); }
.run::after { content: ""; position: absolute; left: 43px; top: 100px; width: 8px; height: 8px; border-radius: 50%; background: #5c5c5c; }
.sep { width: 2px; height: 84px; margin: 12px 20px 0; background: #a8a8a8; flex: none; }
.s2 { margin-left: 23px; margin-right: 19px; }
```
